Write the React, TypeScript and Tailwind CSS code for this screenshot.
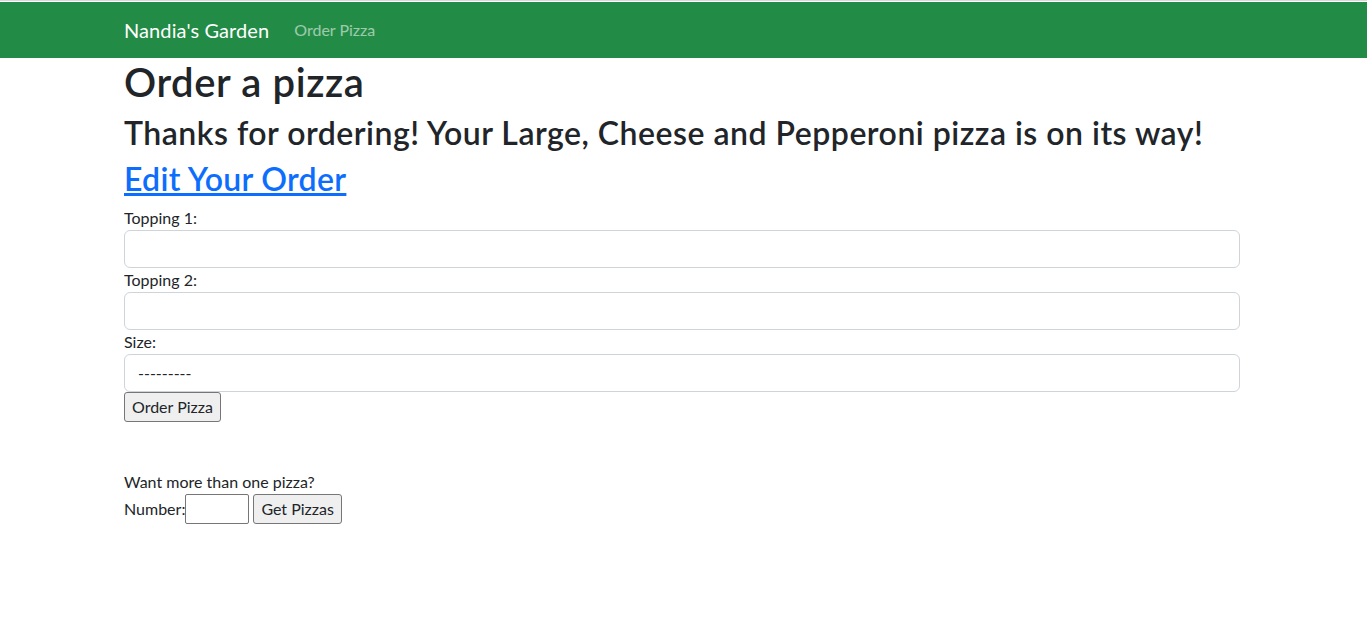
export default function App() {
  const font = { fontFamily: 'Lato, "Noto Sans", sans-serif' };
  return (
    <div className="min-h-[623px] bg-white text-[#212529]" style={font}>
      <div className="h-px bg-[#d9d9d9]" />
      <div className="h-px bg-white" />
      <nav className="h-[56px] bg-[#228b45] flex items-center">
        <div className="ml-[124px] flex items-center">
          <span className="text-[20px] text-white mr-[25px] leading-[30px] tracking-[0.1px]">Nandia's Garden</span>
          <span className="text-[16px] text-white/55 leading-[24px]">Order Pizza</span>
        </div>
      </nav>
      <main className="ml-[124px] w-[1116px] text-[16px] leading-[24px]">
        <h1 className="text-[40px] font-semibold leading-[48px] mb-[8px] tracking-[0.6px]">Order a pizza</h1>
        <h2 className="text-[32px] font-semibold leading-[38px] mb-[8px] tracking-[0.5px]">
          Thanks for ordering! Your Large, Cheese and Pepperoni pizza is on its way!
        </h2>
        <h2 className="text-[32px] font-semibold leading-[38px] mb-[8px] tracking-[0.3px]">
          <a href="#" className="text-[#0d6efd] underline">Edit Your Order</a>
        </h2>
        <form className="flex flex-col" onSubmit={(e) => e.preventDefault()}>
          <label className="block">Topping 1:</label>
          <input className="block w-full h-[38px] border border-[#ced4da] rounded-[6px] px-[12px]" />
          <label className="block">Topping 2:</label>
          <input className="block w-full h-[38px] border border-[#ced4da] rounded-[6px] px-[12px]" />
          <label className="block">Size:</label>
          <div className="w-full h-[38px] border border-[#ced4da] rounded-[6px] pl-[13px] flex items-center">
            <span>---------</span>
          </div>
          <div>
            <button className="h-[30px] px-[7px] bg-[#efefef] border border-[#767676] rounded-[3px] text-[16px]">Order Pizza</button>
          </div>
        </form>
        <div className="mt-[48px]">
          <div>Want more than one pizza?</div>
          <div className="flex items-center">
            <span>Number:</span>
            <input className="w-[64px] h-[30px] border border-[#767676] rounded-[2px]" />
            <button className="ml-[4px] h-[30px] px-[7px] bg-[#efefef] border border-[#767676] rounded-[3px] text-[16px]">Get Pizzas</button>
          </div>
        </div>
      </main>
    </div>
  );
}
